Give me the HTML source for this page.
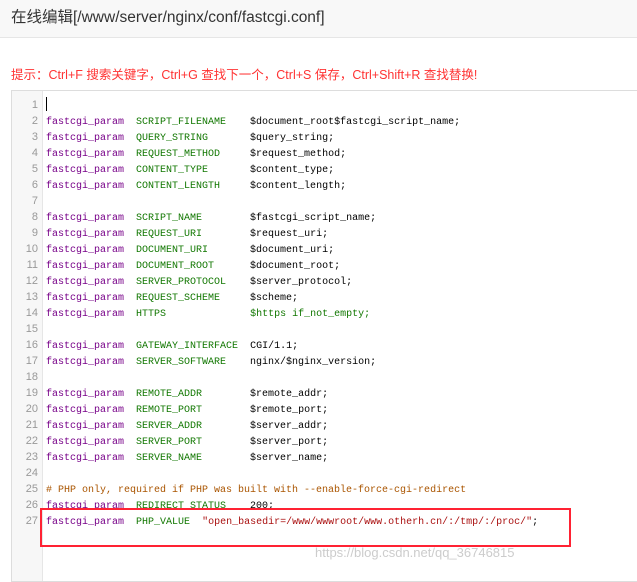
<!DOCTYPE html><html><head><meta charset="utf-8"><style>
body{margin:0;width:637px;height:571px;background:#fff;overflow:hidden;position:relative;font-family:"Liberation Sans","Noto Sans CJK SC",sans-serif}
.hd{position:absolute;left:0;top:0;width:637px;height:38px;background:#f8f8f8;border-bottom:1px solid #e6e6e6;font-size:15.5px;color:#333;line-height:36px;padding-left:11px;box-sizing:border-box}
.tip{position:absolute;left:11px;top:64px;font-size:12.5px;color:#f33;white-space:nowrap}
.ed{position:absolute;left:11px;top:90px;width:640px;height:490px;border:1px solid #ddd;border-right:none}
.gut{position:absolute;left:0;top:0;width:30px;height:100%;background:#f7f7f7;border-right:1px solid #e6e6e6}
pre{margin:0;font-family:"Liberation Mono",monospace;font-size:10px;line-height:16px;position:absolute;top:6px}
.nums{left:0;width:26px;text-align:right;color:#999;font-family:"Liberation Sans",sans-serif;font-size:11px}
.code{left:34px;color:#000}
.k{color:#708}.v{color:#170}.c{color:#a50}.s{color:#a11}
.cur{display:inline-block;width:1px;height:14px;background:#000;vertical-align:-3px}
.box{position:absolute;left:40px;top:508px;width:527px;height:35px;border:2px solid #f23}
.wm{position:absolute;left:315px;top:545px;color:#ccc;font-size:13px}
</style></head><body>
<div class="hd">在线编辑[/www/server/nginx/conf/fastcgi.conf]</div>
<div class="tip">提示：Ctrl+F 搜索关键字，Ctrl+G 查找下一个，Ctrl+S 保存，Ctrl+Shift+R 查找替换!</div>
<div class="ed"><div class="gut"></div>
<pre class="nums">1
2
3
4
5
6
7
8
9
10
11
12
13
14
15
16
17
18
19
20
21
22
23
24
25
26
27</pre>
<pre class="code"><span class="cur"></span>
<span class="k">fastcgi_param</span>  <span class="v">SCRIPT_FILENAME</span>    $document_root$fastcgi_script_name;
<span class="k">fastcgi_param</span>  <span class="v">QUERY_STRING</span>       $query_string;
<span class="k">fastcgi_param</span>  <span class="v">REQUEST_METHOD</span>     $request_method;
<span class="k">fastcgi_param</span>  <span class="v">CONTENT_TYPE</span>       $content_type;
<span class="k">fastcgi_param</span>  <span class="v">CONTENT_LENGTH</span>     $content_length;

<span class="k">fastcgi_param</span>  <span class="v">SCRIPT_NAME</span>        $fastcgi_script_name;
<span class="k">fastcgi_param</span>  <span class="v">REQUEST_URI</span>        $request_uri;
<span class="k">fastcgi_param</span>  <span class="v">DOCUMENT_URI</span>       $document_uri;
<span class="k">fastcgi_param</span>  <span class="v">DOCUMENT_ROOT</span>      $document_root;
<span class="k">fastcgi_param</span>  <span class="v">SERVER_PROTOCOL</span>    $server_protocol;
<span class="k">fastcgi_param</span>  <span class="v">REQUEST_SCHEME</span>     $scheme;
<span class="k">fastcgi_param</span>  <span class="v">HTTPS</span>              <span class="v">$https if_not_empty;</span>

<span class="k">fastcgi_param</span>  <span class="v">GATEWAY_INTERFACE</span>  CGI/1.1;
<span class="k">fastcgi_param</span>  <span class="v">SERVER_SOFTWARE</span>    nginx/$nginx_version;

<span class="k">fastcgi_param</span>  <span class="v">REMOTE_ADDR</span>        $remote_addr;
<span class="k">fastcgi_param</span>  <span class="v">REMOTE_PORT</span>        $remote_port;
<span class="k">fastcgi_param</span>  <span class="v">SERVER_ADDR</span>        $server_addr;
<span class="k">fastcgi_param</span>  <span class="v">SERVER_PORT</span>        $server_port;
<span class="k">fastcgi_param</span>  <span class="v">SERVER_NAME</span>        $server_name;

<span class="c"># PHP only, required if PHP was built with --enable-force-cgi-redirect</span>
<span class="k">fastcgi_param</span>  <span class="v">REDIRECT_STATUS</span>    200;
<span class="k">fastcgi_param</span>  <span class="v">PHP_VALUE</span>  <span class="s">"open_basedir=/www/wwwroot/www.otherh.cn/:/tmp/:/proc/"</span>;</pre>
</div>
<div class="box"></div>
<div class="wm">https://blog.csdn.net/qq_36746815</div>
</body></html>
